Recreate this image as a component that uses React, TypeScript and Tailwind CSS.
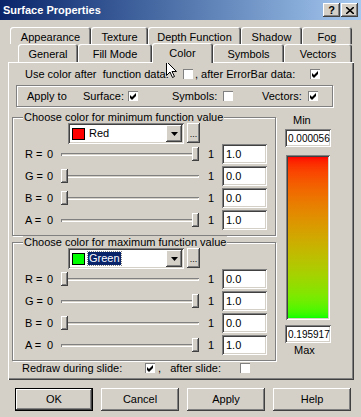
import React from 'react';

const RAISED = 'shadow-[inset_-1px_-1px_0_#404040,inset_1px_1px_0_#ffffff,inset_-2px_-2px_0_#808080]';
const SUNKEN = 'shadow-[inset_1px_1px_0_#808080,inset_-1px_-1px_0_#ffffff,inset_2px_2px_0_#404040,inset_-2px_-2px_0_#d4d0c8]';

function Check({ on }: { on?: boolean }) {
  return (
    <span className="inline-flex h-[10px] w-[10px] shrink-0 items-center justify-center bg-white shadow-[inset_1px_1px_0_#808080,inset_-1px_-1px_0_#ffffff]">
      {on && (
        <svg width="7" height="7" viewBox="0 0 7 7">
          <path d="M0 2 L2 4 L6 0 L6 3 L2 7 L0 5 Z" fill="#000" />
        </svg>
      )}
    </span>
  );
}

function Slider({ right }: { right: boolean }) {
  return (
    <div className="relative h-[20px] w-[140px]">
      <div className="absolute left-[1px] right-[1px] top-[9px] h-[3px] shadow-[inset_1px_1px_0_#808080,inset_-1px_-1px_0_#ffffff]" />
      <div className={`absolute top-[3px] h-[14px] w-[7px] bg-[#d4d0c8] ${RAISED} ${right ? 'right-[1px]' : 'left-[1px]'}`} />
    </div>
  );
}

function Row({ ch, right, value }: { ch: string; right: boolean; value: string }) {
  return (
    <div className="mb-[2px] flex h-[20px] items-center pl-[12px]">
      <span className="w-[22px]">{ch} =</span>
      <span className="w-[13px]">0</span>
      <Slider right={right} />
      <span className="w-[22px] pl-[8px]">1</span>
      <div className={`flex h-[20px] w-[45px] items-center bg-white pl-[4px] ${SUNKEN}`}>{value}</div>
    </div>
  );
}

function ColorGroup({ title, swatch, name, selected, values }: { title: string; swatch: string; name: string; selected?: boolean; values: [boolean, string][] }) {
  return (
    <fieldset className="h-[125px] border border-[#808080] shadow-[1px_1px_0_#ffffff,inset_1px_1px_0_#ffffff]">
      <legend className="ml-[10px] bg-[#d4d0c8] px-[1px] leading-[12px]">{title}</legend>
      <div className="ml-[55px] flex h-[21px] items-start">
        <div className={`flex h-[21px] w-[116px] items-center bg-white ${SUNKEN}`}>
          <span className={`ml-[4px] h-[12px] w-[13px] border border-black ${swatch}`} />
          <span className={`ml-[3px] px-[1px] leading-[13px] ${selected ? 'bg-[#0a246a] text-white outline-1 outline-dotted outline-[#808080]' : ''}`}>{name}</span>
          <span className={`ml-auto mr-[2px] flex h-[17px] w-[16px] items-center justify-center bg-[#d4d0c8] ${RAISED}`}>
            <svg width="7" height="4" viewBox="0 0 7 4"><path d="M0 0 H7 L3.5 4 Z" fill="#000" /></svg>
          </span>
        </div>
        <div className={`ml-[3px] flex h-[20px] w-[13px] items-end justify-center bg-[#d4d0c8] pb-[4px] text-[9px] leading-[9px] ${RAISED}`}>...</div>
      </div>
      {['R', 'G', 'B', 'A'].map((c, i) => (
        <Row key={c} ch={c} right={values[i][0]} value={values[i][1]} />
      ))}
    </fieldset>
  );
}

const tabBase = 'flex items-start justify-center pt-[4px] leading-[13px] rounded-t-[3px] shadow-[inset_1px_1px_0_#ffffff,inset_-1px_0_0_#404040,inset_-2px_0_0_#808080]';

export default function App() {
  return (
    <div className="relative flex h-[417px] w-[361px] flex-col overflow-hidden bg-[#d4d0c8] text-[11px] text-black" style={{ fontFamily: '"Liberation Sans", Arial, sans-serif' }}>
      {/* title bar */}
      <div className="flex h-[20px] shrink-0 items-center justify-between bg-gradient-to-r from-[#0a246a] to-[#a6caf0] pl-[3px] pr-[3px]">
        <span className="text-[11px] font-bold text-white">Surface Properties</span>
        <div className="flex">
          <span className={`flex h-[14px] w-[17px] items-center justify-center bg-[#d4d0c8] text-[11px] font-bold ${RAISED}`}>?</span>
          <span className={`ml-[1px] flex h-[14px] w-[17px] items-center justify-center bg-[#d4d0c8] ${RAISED}`}>
            <svg width="8" height="7" viewBox="0 0 8 7"><path d="M0 0 L8 7 M8 0 L0 7" stroke="#000" strokeWidth="1.6" /></svg>
          </span>
        </div>
      </div>

      {/* tabs */}
      <div className="mt-[7px] ml-[10px] flex h-[17px]">
        <div className={`${tabBase} w-[81px]`}>Appearance</div>
        <div className={`${tabBase} w-[57px]`}>Texture</div>
        <div className={`${tabBase} w-[93px]`}>Depth Function</div>
        <div className={`${tabBase} w-[61px]`}>Shadow</div>
        <div className={`${tabBase} w-[50px]`}>Fog</div>
      </div>
      <div className="ml-[18px] flex h-[18px] items-end">
        <div className={`${tabBase} h-[18px] w-[60px]`}>General</div>
        <div className={`${tabBase} h-[18px] w-[74px]`}>Fill Mode</div>
        <div className={`${tabBase} relative z-10 h-[20px] w-[61px] translate-y-[1px] bg-[#d4d0c8] pt-[3px]`}>Color</div>
        <div className={`${tabBase} h-[18px] w-[71px]`}>Symbols</div>
        <div className={`${tabBase} h-[18px] w-[68px]`}>Vectors</div>
      </div>

      {/* panel */}
      <div className="ml-[8px] flex h-[318px] w-[346px] flex-col shadow-[inset_1px_1px_0_#ffffff,inset_-1px_-1px_0_#404040,inset_-2px_-2px_0_#808080]">
        <div className="mt-[5px] flex h-[14px] items-center pl-[17px]">
          <span className="w-[158px]">Use color after&nbsp; function data:</span>
          <Check />
          <span className="ml-[2px] w-[115px]">, after ErrorBar data:</span>
          <Check on />
        </div>

        <div className="mt-[4px] ml-[8px] flex h-[22px] w-[317px] items-center border border-[#808080] pl-[10px] shadow-[1px_1px_0_#ffffff,inset_1px_1px_0_#ffffff]">
          <span className="w-[56px]">Apply to</span>
          <span className="w-[45px]">Surface:</span>
          <Check on />
          <span className="ml-[34px] w-[51px]">Symbols:</span>
          <Check />
          <span className="ml-[29px] w-[46px]">Vectors:</span>
          <Check on />
        </div>

        <div className="mt-[4px] flex">
          <div className="ml-[4px] flex w-[264px] flex-col">
            <ColorGroup
              title="Choose color for minimum function value"
              swatch="bg-[#ff0000]"
              name="Red"
              values={[[true, '1.0'], [false, '0.0'], [false, '0.0'], [true, '1.0']]}
            />
            <ColorGroup
              title="Choose color for maximum function value"
              swatch="bg-[#00ff00]"
              name="Green"
              selected
              values={[[false, '0.0'], [true, '1.0'], [false, '0.0'], [true, '1.0']]}
            />
          </div>
          <div className="ml-[9px] flex w-[46px] flex-col pt-[2px]">
            <span className="h-[14px] pl-[8px] leading-[14px]">Min</span>
            <div className={`mt-[2px] flex h-[18px] items-center bg-white pl-[3px] text-[10px] ${SUNKEN}`}>0.000056</div>
            <div className={`mt-[8px] ml-[1px] h-[165px] w-[44px] p-[2px] ${SUNKEN}`}>
              <div className="h-full w-full bg-gradient-to-b from-[#ff0000] to-[#00ff00]" />
            </div>
            <div className={`mt-[5px] flex h-[18px] items-center bg-white pl-[3px] text-[10px] ${SUNKEN}`}>0.195917</div>
            <span className="h-[14px] pl-[9px] leading-[14px]">Max</span>
          </div>
        </div>

        <div className="flex h-[14px] items-center pl-[14px]">
          <span className="w-[123px]">Redraw during slide:</span>
          <Check on />
          <span className="ml-[3px] w-[82px]">,&nbsp;&nbsp; after slide:</span>
          <Check />
        </div>
      </div>

      {/* buttons */}
      <div className="mt-[8px] ml-[15px] flex gap-[8px]">
        <div className={`flex h-[23px] w-[78px] items-center justify-center border border-black bg-[#d4d0c8] ${RAISED}`}>OK</div>
        <div className={`flex h-[23px] w-[78px] items-center justify-center bg-[#d4d0c8] ${RAISED}`}>Cancel</div>
        <div className={`flex h-[23px] w-[78px] items-center justify-center bg-[#d4d0c8] ${RAISED}`}>Apply</div>
        <div className={`flex h-[23px] w-[78px] items-center justify-center bg-[#d4d0c8] ${RAISED}`}>Help</div>
      </div>

      {/* mouse pointer */}
      <svg className="absolute left-[166px] top-[61px]" width="11" height="18" viewBox="0 0 11 18">
        <path d="M0.5 0.5 V14.5 L4 11 L6.5 16.5 L8.5 15.5 L6 10.5 H10.5 Z" fill="#fff" stroke="#000" strokeWidth="1" />
      </svg>
    </div>
  );
}
